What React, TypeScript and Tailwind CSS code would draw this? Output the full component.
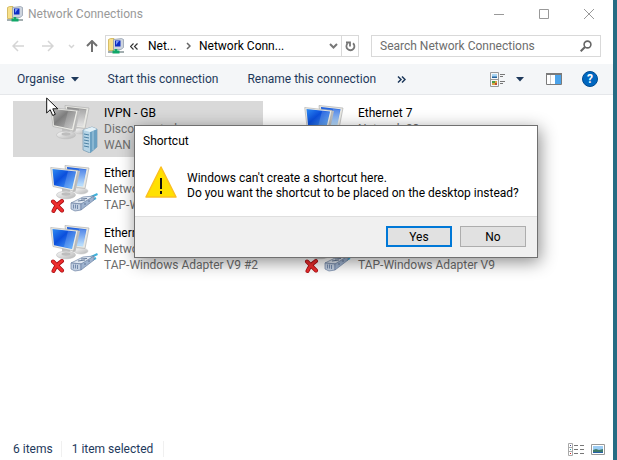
import { useId } from 'react';
import { clsx } from 'clsx';

type IconKind = 'vpn' | 'ethernet';

interface Connection {
  name: string;
  status: string;
  device: string;
  kind: IconKind;
  selected?: boolean;
}

const connections: Connection[] = [
  { name: 'IVPN - GB', status: 'Disconnected', device: 'WAN Miniport', kind: 'vpn', selected: true },
  { name: 'Ethernet 7', status: 'Network 28', device: 'Ethernet Adapter', kind: 'ethernet' },
  { name: 'Ethernet', status: 'Network', device: 'TAP-Windows', kind: 'ethernet' },
  { name: 'Ethernet', status: 'Network', device: 'TAP-Windows', kind: 'ethernet' },
  { name: 'Ethernet', status: 'Network', device: 'TAP-Windows Adapter V9 #2', kind: 'ethernet' },
  { name: 'Ethernet', status: 'Network', device: 'TAP-Windows Adapter V9', kind: 'ethernet' },
];

function FolderNetworkIcon() {
  return (
    <svg width="16" height="16" viewBox="0 0 16 16" className="shrink-0">
      <path d="M.5 1.500l2-1h3.500v12H.5z" fill="#f8e08a" stroke="#cdb050" strokeWidth=".8" />
      <path d="M5.500 1.500l8-1 2 1v8l-2.500 2H5.500z" fill="#cdd4de" stroke="#8a96a6" strokeWidth=".7" />
      <path d="M7 2.500h5.500v6H7z" fill="#0c2cc4" />
      <path d="M8 3h3L8 7z" fill="#7d9af5" />
      <path d="M0 14h16" stroke="#a3aeb0" strokeWidth="2" />
      <path d="M4.500 14h7" stroke="#10a868" strokeWidth="3" />
      <path d="M8 11v3" stroke="#10a868" strokeWidth="2.500" />
    </svg>
  );
}

function ConnectionIcon({ kind }: { kind: IconKind }) {
  const id = useId();
  const vpn = kind === 'vpn';
  return (
    <svg width="48" height="48" viewBox="0 0 48 48" className="shrink-0">
      <defs>
        <linearGradient id={`${id}s`} x1="0" y1="0" x2="1" y2="1">
          <stop offset="0" stopColor={vpn ? '#b9b9b9' : '#2f8bf2'} />
          <stop offset=".4" stopColor={vpn ? '#7d7d7d' : '#0b4fdc'} />
          <stop offset="1" stopColor={vpn ? '#c4c4c4' : '#5fb4ff'} />
        </linearGradient>
        <linearGradient id={`${id}r`} x1="0" y1="0" x2="0" y2="1">
          <stop offset="0" stopColor={vpn ? '#8a8a8a' : '#1659dd'} />
          <stop offset="1" stopColor={vpn ? '#dedede' : '#b5e0ff'} />
        </linearGradient>
        <linearGradient id={`${id}b`} x1="0" y1="0" x2="1" y2="1">
          <stop offset="0" stopColor="#fbfbfb" />
          <stop offset="1" stopColor="#b4b4b4" />
        </linearGradient>
      </defs>
      {/* rear monitor */}
      <ellipse cx="31" cy="26" rx="7" ry="3" fill={`url(#${id}b)`} stroke="#c4c4c4" strokeWidth=".5" />
      <path d="M15 .5L39 3l-4 20.500L17 21z" fill="#e9e9e4" stroke="#b0b0b0" strokeWidth=".7" />
      <path d="M17 2l19.500 2.200L33 21.500 18 20z" fill={`url(#${id}r)`} />
      <path d="M29 4l7 .8-3 16-6-1z" fill="#fff" opacity=".2" />
      {/* front monitor */}
      <path d="M12 23l8 2v4h-8z" fill="#c2c2c2" />
      <ellipse cx="16" cy="30" rx="9.500" ry="3.800" fill={`url(#${id}b)`} stroke="#bcbcbc" strokeWidth=".6" />
      <ellipse cx="16" cy="29" rx="4.500" ry="1.700" fill="#bdbdbd" />
      <path d="M25 5l5 1-4.500 20.500-3 .5z" fill="#bdbdbd" />
      <path d="M.7 2.500L28 5.500 23.500 26 3 21.500z" fill="#ecece7" stroke="#aaa" strokeWidth=".6" />
      <path d="M2.500 4l23.500 2.600L22 24 4 20.200z" fill={`url(#${id}s)`} />
      <path d="M18 6l7.500.8L22 23.500l-8-1.700z" fill="#fff" opacity=".16" />
      {vpn ? (
        <g>
          <path d="M33 25l9-3 5 2v18l-7 6-7-3z" fill="#b5d4e6" stroke="#7397af" strokeWidth=".7" />
          <path d="M40 27l7-3v18l-7 6z" fill="#6ba0c2" />
          <path d="M43 26v19" stroke="#a9cde2" strokeWidth="1" />
          <path d="M34 29l5 1M34 32l5 1M34 35l5 1M34 38l5 1M34 41l5 1" stroke="#4d81a3" />
          <path d="M33 25l9-3 5 2-7 3z" fill="#e3f1f8" />
        </g>
      ) : (
        <g>
          <path d="M40 32.500l7.500-3.500M42 35l4-2" stroke="#3fb2dc" strokeWidth="2" />
          {/* plug: top face, front face, side face */}
          <path d="M21 38l12-6 11-1-10 8z" fill="#dfe7f1" stroke="#6d83a3" strokeWidth=".7" />
          <path d="M21 38l10 1v6l-6 1-4-2z" fill="#c3d0e2" stroke="#6d83a3" strokeWidth=".7" />
          <path d="M31 39l13-8v4l-13 10z" fill="#9fb3cf" stroke="#6d83a3" strokeWidth=".7" />
          <path d="M23.500 39.500v4M25.500 39.500v4M27.500 40v4" stroke="#6079a0" strokeWidth=".8" />
          <path d="M28 36l7-1M31 34l6-.5M35 38v2M39 35v2" stroke="#5b7191" strokeWidth=".9" />
          <path d="M3 36.500l9 9M12 36Q6 40 3.500 46" stroke="#a80d12" strokeWidth="4" strokeLinecap="round" fill="none" />
          <path d="M3 36.500l9 9M12 36Q6 40 3.500 46" stroke="#ee2d2d" strokeWidth="2.500" strokeLinecap="round" fill="none" />
        </g>
      )}
    </svg>
  );
}

function TitleBar() {
  return (
    <header className="flex h-7 items-center pr-0.5 pl-[7px] text-[#999]">
      <FolderNetworkIcon />
      <h1 className="ml-[5px] flex-1">Network Connections</h1>
      <button aria-label="Minimise" className="flex h-7 w-[45px] items-center justify-center">
        <svg width="10" height="10" stroke="#999"><path d="M0 5.500h10" /></svg>
      </button>
      <button aria-label="Maximise" className="flex h-7 w-[45px] items-center justify-center">
        <svg width="10" height="10" stroke="#999" fill="none"><path d="M.5.5h9v9h-9z" /></svg>
      </button>
      <button aria-label="Close" className="flex h-7 w-[45px] items-center justify-center">
        <svg width="10" height="10" stroke="#999"><path d="M0 0l10 10M10 0L0 10" /></svg>
      </button>
    </header>
  );
}

function NavBar() {
  return (
    <nav className="flex h-9 items-center pr-3 pl-3">
      <button aria-label="Back" className="w-[13px]">
        <svg width="13" height="12" fill="none" stroke="#d5d5d5" strokeWidth="1.500"><path d="M12 6H1M6 1L1 6l5 5" /></svg>
      </button>
      <button aria-label="Forward" className="ml-4 w-[13px]">
        <svg width="13" height="12" fill="none" stroke="#d5d5d5" strokeWidth="1.500"><path d="M1 6h11M7 1l5 5-5 5" /></svg>
      </button>
      <button aria-label="Recent locations" className="ml-3.5 w-2">
        <svg width="7" height="5" fill="none" stroke="#d5d5d5" strokeWidth="1.500"><path d="M1 1l2.500 2.500L6 1" /></svg>
      </button>
      <button aria-label="Up" className="ml-2.5 w-3">
        <svg width="12" height="12" fill="none" stroke="#707070" strokeWidth="2"><path d="M6 12V1M1 6l5-5 5 5" /></svg>
      </button>
      <div className="ml-[7px] flex h-[22px] min-w-0 flex-1 items-center border border-[#d9d9d9] pl-0.5 text-black">
        <FolderNetworkIcon />
        <svg width="8" height="7" className="ml-1.5 shrink-0" fill="none" stroke="#333" strokeWidth="1.200"><path d="M3.500.5l-3 3 3 3M7.500.5l-3 3 3 3" /></svg>
        <button className="ml-2.5 w-8 shrink-0 text-left">Net...</button>
        <svg width="5" height="8" className="mr-2 ml-1.5 shrink-0" fill="none" stroke="#666" strokeWidth="1.500"><path d="M1 1l3 3-3 3" /></svg>
        <button className="min-w-0 flex-1 truncate text-left">Network Conn...</button>
        <button aria-label="Previous locations" className="mr-[3px]">
          <svg width="9" height="6" fill="none" stroke="#777" strokeWidth="2"><path d="M1 1l3.500 3.500L8 1" /></svg>
        </button>
        <button aria-label="Refresh" className="flex h-full w-[17px] items-center justify-center border-l border-[#d9d9d9]">
          <svg width="11" height="12" fill="none" stroke="#777" strokeWidth="1.800"><path d="M8 3.200a4 4 0 1 1-5.500.3M1 2.500h4v4" /></svg>
        </button>
      </div>
      <label className="ml-3 flex h-[22px] w-[230px] items-center border border-[#d9d9d9] pr-2 pl-2">
        <input
          type="text"
          aria-label="Search Network Connections"
          placeholder="Search Network Connections"
          className="min-w-0 flex-1 outline-none placeholder:text-[#6d6d6d]"
        />
        <svg width="12" height="12" fill="none" stroke="#666" strokeWidth="1.600"><circle cx="7.500" cy="4.500" r="3.400" /><path d="M5 7L.7 11.300" strokeWidth="2" /></svg>
      </label>
    </nav>
  );
}

function Toolbar() {
  return (
    <div className="flex h-[31px] items-center border-b border-[#e5e7ea] bg-[#f4f6f8] pr-[15px] pl-[17px] text-[#1e395b]">
      <button className="flex items-center whitespace-nowrap">
        Organise
        <svg width="8" height="5" className="ml-1.5" fill="#1e395b"><path d="M0 0h8L4 4.500z" /></svg>
      </button>
      <button className="ml-[29px] whitespace-nowrap">Start this connection</button>
      <button className="ml-[29px] whitespace-nowrap">Rename this connection</button>
      <button aria-label="More commands" className="ml-[21px]">
        <svg width="9" height="7" fill="none" stroke="#1e395b" strokeWidth="1.500"><path d="M1 .5l3 3-3 3M5 .5l3 3-3 3" /></svg>
      </button>
      <button aria-label="Change your view" className="ml-auto flex items-center">
        <svg width="16" height="15" viewBox="0 0 16 15" fill="none">
          <path d="M.5.5h8v14h-8zM.5 7.500h8" stroke="#999" />
          <path d="M2 2h5v4H2z" fill="#a9d5f3" /><path d="M2 4.500h5V6H2z" fill="#24639c" />
          <path d="M2 9h5v4H2z" fill="#d9a441" /><path d="M2 9h3v2H2z" fill="#4b9b45" /><path d="M5 11h2v2H5z" fill="#c24b2f" />
          <path d="M10 2.500h5M10 4.500h3M10 9.500h5M10 11.500h3" stroke="#777" />
        </svg>
        <svg width="8" height="5" className="ml-2.5" fill="#1e395b"><path d="M0 0h8L4 4.500z" /></svg>
      </button>
      <button aria-label="Preview pane" className="ml-[22px]">
        <svg width="16" height="12" viewBox="0 0 16 12">
          <path d="M.5.5h15v11H.5z" fill="#fff" stroke="#7b7b7b" />
          <path d="M0 0h16v2H0z" fill="#7b7b7b" />
          <path d="M9 2h6v9H9z" fill="#4ba3ea" />
          <path d="M4.500 2v9" stroke="#ccc" />
        </svg>
      </button>
      <button aria-label="Help" className="ml-5 flex size-4 items-center justify-center rounded-full border border-[#004a8f] bg-[#0067c0] text-xs font-bold text-white">
        ?
      </button>
    </div>
  );
}

function ConnectionItem({ name, status, device, kind, selected }: Connection) {
  return (
    <li className={clsx('flex min-w-0 items-center py-1 pl-[37px]', selected && 'bg-[#d9d9d9]')}>
      <ConnectionIcon kind={kind} />
      <div className="ml-1.5 min-w-0 leading-4 whitespace-nowrap text-[#6d6d6d]">
        <p className="text-black">{name}</p>
        <p>{status}</p>
        <p>{device}</p>
      </div>
    </li>
  );
}

function StatusBar() {
  return (
    <footer className="flex h-6 items-center pt-0.5 pr-2 pl-[13px] text-[#1e395b]">
      <span className="border-r border-[#f0f0f0] pr-2">6 items</span>
      <span className="border-r border-[#f0f0f0] px-2.5">1 item selected</span>
      <button aria-label="Details view" className="ml-auto">
        <svg width="16" height="13" viewBox="0 0 16 13" fill="none">
          <path d="M.5.5h4v12h-4zM.5 4.500h4M.5 8.500h4" stroke="#aaa" />
          <path d="M2 2h1v1H2z" fill="#448" /><path d="M2 6h1v1H2z" fill="#29a" /><path d="M2 10h1v1H2z" fill="#c22" />
          <path d="M6 2.500h4M12 2.500h4M6 6.500h4M12 6.500h4M6 10.500h4M12 10.500h4" stroke="#777" />
        </svg>
      </button>
      <button aria-label="Large icons view" className="ml-[7px]">
        <svg width="14" height="11" viewBox="0 0 14 11">
          <path d="M.5.5h13v10H.5z" fill="#fff" stroke="#999" />
          <path d="M2 2h10v7H2z" fill="#9dcdf4" /><path d="M2 6l3-1 3 1 4-1v4H2z" fill="#3d7a6b" /><path d="M2 8h10v1H2z" fill="#2660a8" />
        </svg>
      </button>
    </footer>
  );
}

function ShortcutDialog() {
  return (
    <section
      role="dialog"
      aria-labelledby="dialog-title"
      className="absolute top-[125px] left-[134px] w-[404px] border border-[#707070] bg-white text-black shadow-[2px_4px_16px_rgba(0,0,0,0.45)]"
    >
      <h2 id="dialog-title" className="px-2 pt-[7px] leading-4">Shortcut</h2>
      <div className="flex gap-2.5 px-2.5 pt-[17px] pb-[15px]">
        <svg width="32" height="32" viewBox="0 0 32 32" className="shrink-0">
          <path d="M16 1L31 31H1z" fill="#ffe000" stroke="#fcbf22" strokeWidth="1.500" strokeLinejoin="round" />
          <path d="M15 12h2v11h-2zM15 25h2v3h-2z" fill="#111" />
        </svg>
        <p className="pt-[5px] leading-[15px] whitespace-nowrap">
          Windows can't create a shortcut here.
          <br />
          Do you want the shortcut to be placed on the desktop instead?
        </p>
      </div>
      <div className="flex justify-end gap-2 border-t border-[#dfdfdf] bg-[#f0f0f0] pt-[9px] pr-[11px] pb-2.5">
        <button className="h-[21px] w-[66px] border-2 border-[#0078d7] bg-[#e1e1e1] leading-4">Yes</button>
        <button className="h-[21px] w-[66px] border border-[#adadad] bg-[#e1e1e1] leading-4">No</button>
      </div>
    </section>
  );
}

export default function App() {
  return (
    <div className="relative flex min-h-screen flex-col overflow-hidden border-r-4 border-[#266c84] bg-white font-[Roboto,'Open_Sans',sans-serif] text-xs">
      <TitleBar />
      <NavBar />
      <Toolbar />
      <main className="flex-1 px-[13px] pt-1.5">
        <ul className="grid grid-cols-[250px_1fr] gap-1">
          {connections.map((connection, index) => (
            <ConnectionItem key={index} {...connection} />
          ))}
        </ul>
      </main>
      <StatusBar />
      <ShortcutDialog />
      <svg width="13" height="20" viewBox="0 0 13 20" className="absolute top-[97px] left-[46px]">
        <path d="M.7 1v15l3.500-3.300L6.700 18.500l2.600-1.200-2.500-5.500h5z" fill="#fff" stroke="#111" />
      </svg>
    </div>
  );
}
